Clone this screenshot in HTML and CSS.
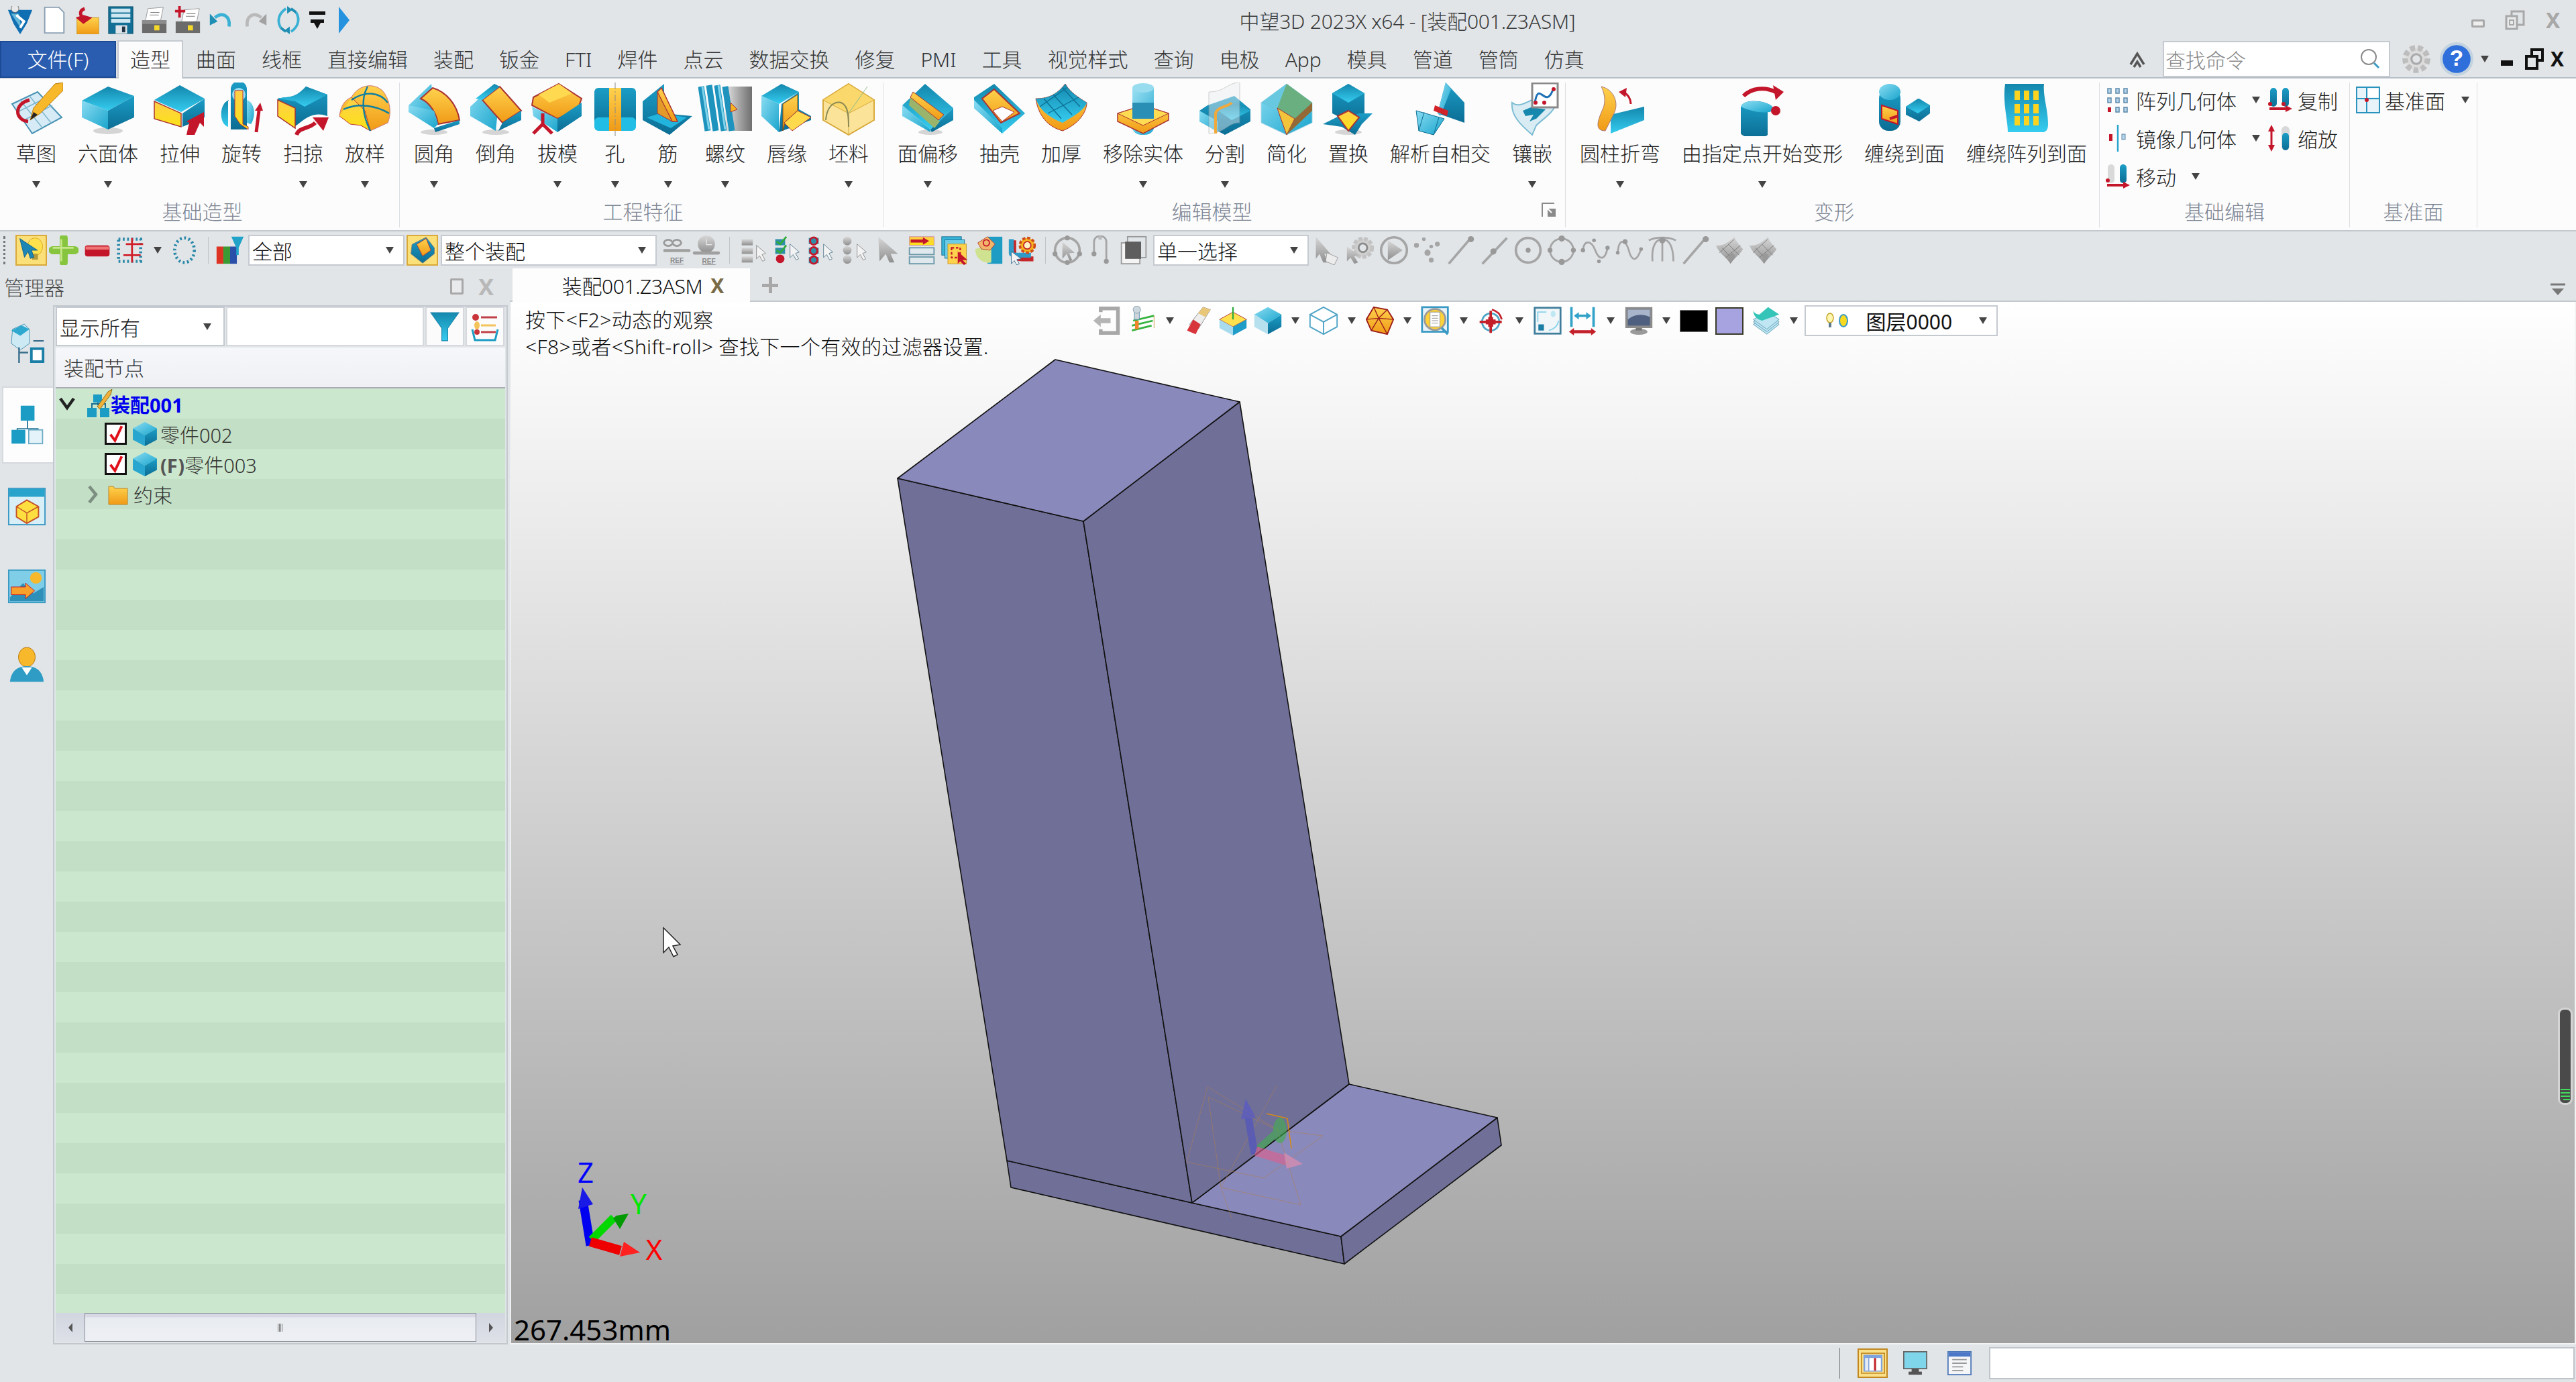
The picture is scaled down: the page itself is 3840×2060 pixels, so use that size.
FILE: index.html
```html
<!DOCTYPE html>
<html lang="zh-CN">
<head>
<meta charset="utf-8">
<title>中望3D 2023X x64 - [装配001.Z3ASM]</title>
<link rel="stylesheet" href="styles.css">
</head>
<body>
<svg class="defs" aria-hidden="true">
<defs>
<linearGradient id="t" x1="0" y1="0" x2="0" y2="1"><stop offset="0" stop-color="#1487ad"/><stop offset="1" stop-color="#35cdf0"/></linearGradient>
<linearGradient id="l" x1="0" y1="0" x2="1" y2="1"><stop offset="0" stop-color="#8adcf2"/><stop offset="1" stop-color="#1aa5cd"/></linearGradient>
<linearGradient id="r" x1="0" y1="0" x2="0" y2="1"><stop offset="0" stop-color="#1b9dc6"/><stop offset="1" stop-color="#0c6d94"/></linearGradient>
<linearGradient id="y" x1="0" y1="0" x2="0" y2="1"><stop offset="0" stop-color="#ffcf4a"/><stop offset="1" stop-color="#fbe216"/></linearGradient>
<linearGradient id="o" x1="0" y1="0" x2="0" y2="1"><stop offset="0" stop-color="#ffd24d"/><stop offset="1" stop-color="#f09a16"/></linearGradient>
<linearGradient id="g" x1="0" y1="0" x2="0" y2="1"><stop offset="0" stop-color="#d8d8d8"/><stop offset="1" stop-color="#8f8f8f"/></linearGradient>
<linearGradient id="m" x1="0" y1="0" x2="1" y2="0"><stop offset="0" stop-color="#e6e6e6"/><stop offset=".6" stop-color="#9c9c9c"/><stop offset="1" stop-color="#6f6f6f"/></linearGradient>

<symbol id="s-sketch" viewBox="0 0 80 80"><polygon points="4,32 42,14 78,52 34,76" fill="#d6ebf5" stroke="#4a93b5" stroke-width="2"/><path d="M16 26 48 66M30 20 62 60M12 44 52 24M22 56 64 34" stroke="#7db6cf" stroke-width="1.5" fill="none"/><path d="M30 26C6 32 8 56 28 58" stroke="#c4162a" stroke-width="5" fill="none"/><polygon points="31,56 36,38 68,2 80,0 80,12 46,46" fill="#f7b82c" stroke="#b97a14"/><polygon points="31,56 36,44 42,48" fill="#222"/></symbol>
<symbol id="s-cube" viewBox="0 0 80 80"><ellipse cx="40" cy="72" rx="22" ry="5" fill="#bbb" opacity=".6"/><polygon points="40,6 79,20 40,42 1,27" fill="url(#t)"/><polygon points="1,27 40,42 40,70 1,52" fill="url(#l)"/><polygon points="79,20 79,52 40,70 40,42" fill="url(#r)"/></symbol>
<symbol id="s-extrude" viewBox="0 0 80 80"><polygon points="40,4 77,24 42,44 2,26" fill="url(#t)"/><polygon points="2,28 42,46 42,66 2,54" fill="url(#y)" stroke="#a33" stroke-width="1.5"/><polygon points="77,24 77,52 44,66 44,46" fill="url(#r)"/><polygon points="50,78 54,60 50,58 76,44 76,66 70,60 62,78" fill="#c4162a"/></symbol>
<symbol id="s-revolve" viewBox="0 0 80 80"><path d="M24 10a12 12 0 0 1 24 0v60H24z" fill="url(#r)"/><path d="M22 26C6 30 6 62 20 66V26z" fill="url(#t)"/><path d="M48 26C60 30 62 50 54 62L48 60z" fill="url(#l)"/><circle cx="36" cy="18" r="10" fill="#9bdcf0"/><polygon points="30,12 42,12 42,62 50,66 50,70 38,62 30,50" fill="url(#y)" stroke="#b33"/><path d="M62 74 66 42" stroke="#c4162a" stroke-width="5"/><polygon points="60,42 72,42 68,30" fill="#c4162a"/></symbol>
<symbol id="s-sweep" viewBox="0 0 80 80"><path d="M2 24C16 20 26 26 44 6L76 18V50C50 40 36 62 26 66L2 50z" fill="url(#r)"/><path d="M2 24C16 20 26 26 44 6L76 18 42 36 28 28z" fill="url(#t)"/><polygon points="2,26 28,38 28,68 2,50" fill="url(#y)" stroke="#a33" stroke-width="1.5"/><path d="M30 78C34 66 48 70 58 60" stroke="#c4162a" stroke-width="6" fill="none"/><polygon points="54,52 78,52 70,72" fill="#c4162a"/></symbol>
<symbol id="s-loft" viewBox="0 0 80 80"><path d="M2 50C4 34 10 26 20 22 28 6 50 -2 66 12 78 26 80 46 74 60L48 72 34 64z" fill="url(#o)" stroke="#c77" stroke-width="1"/><path d="M2 50 18 62 34 64 48 72 40 42 20 22" fill="url(#y)" stroke="#b33"/><path d="M20 26C40 12 62 14 74 30M8 40C30 30 56 34 76 46M44 6C34 24 36 48 48 72" stroke="#0c7ea3" stroke-width="2.4" fill="none"/></symbol>
<symbol id="s-fillet" viewBox="0 0 80 80"><ellipse cx="40" cy="74" rx="20" ry="4" fill="#bbb" opacity=".6"/><polygon points="36,2 2,34 40,68 40,34" fill="url(#l)"/><path d="M20 24 38 8C58 14 74 32 78 56L46 62C44 46 34 30 20 24z" fill="url(#o)" stroke="#a33" stroke-width="2"/><polygon points="2,34 2,44 40,68 46,62 40,42" fill="url(#l)"/><polygon points="78,56 78,62 42,74 40,68" fill="url(#r)"/></symbol>
<symbol id="s-chamfer" viewBox="0 0 80 80"><ellipse cx="40" cy="74" rx="20" ry="4" fill="#bbb" opacity=".6"/><polygon points="38,2 2,36 2,50 40,72 44,34" fill="url(#l)"/><polygon points="46,6 20,26 50,60 78,42" fill="url(#o)" stroke="#a33" stroke-width="2"/><polygon points="78,42 78,56 44,72 50,60" fill="url(#r)"/><polygon points="38,2 46,6 20,26 10,24" fill="url(#t)"/></symbol>
<symbol id="s-draft" viewBox="0 0 80 80"><polygon points="42,2 76,24 70,40 40,54 2,34 4,22" fill="url(#o)" stroke="#a33" stroke-width="2"/><polygon points="42,2 62,16 28,30 12,18" fill="#ffd94f"/><polygon points="2,36 40,54 40,74 4,50" fill="url(#l)"/><polygon points="76,30 76,50 40,74 40,54" fill="url(#r)"/><path d="M18 46V62M18 62 4 76M18 62 32 76" stroke="#c4162a" stroke-width="5" fill="none"/></symbol>
<symbol id="s-hole" viewBox="0 0 80 80"><rect x="9" y="8" width="62" height="62" rx="6" fill="url(#r)"/><rect x="9" y="52" width="62" height="20" rx="6" fill="#22bde4"/><rect x="31" y="8" width="18" height="64" fill="url(#o)"/><path d="M40 0V80" stroke="#8a8a8a" stroke-dasharray="10 3 2 3" fill="none"/></symbol>
<symbol id="s-rib" viewBox="0 0 80 80"><polygon points="2,28 34,2 34,46 76,50 42,78 2,56" fill="url(#r)"/><polygon points="8,52 28,46 68,52 44,68" fill="#22b4dc"/><polygon points="24,14 30,8 54,58 46,58" fill="url(#o)" stroke="#a33" stroke-width="1.5"/><polygon points="24,14 46,58 24,46" fill="#e39a28" stroke="#a33"/></symbol>
<symbol id="s-thread" viewBox="0 0 80 80"><rect x="40" y="6" width="40" height="66" fill="url(#m)"/><path d="M4 6 14 72M16 4 26 72M28 4 38 72M40 6 50 72" stroke="#1d93bd" stroke-width="9"/><path d="M6 6 16 70M30 4 40 70" stroke="#7fd3ea" stroke-width="3"/><polygon points="48,30 58,40 48,44" fill="#f6b21f" stroke="#a33"/></symbol>
<symbol id="s-lip" viewBox="0 0 80 80"><polygon points="32,2 58,14 28,32 2,20" fill="url(#t)"/><polygon points="2,20 28,32 28,74 2,50" fill="url(#l)"/><polygon points="58,14 58,40 76,50 76,56 28,74 32,32" fill="url(#r)"/><polygon points="34,32 56,18 56,42 38,58 34,72 34,56" fill="url(#o)" stroke="#8a4a10"/><polygon points="36,60 56,42 76,52 48,72" fill="#ffda4d" stroke="#a33"/></symbol>
<symbol id="s-stock" viewBox="0 0 80 80"><polygon points="40,2 78,26 78,56 40,78 2,56 2,26" fill="#fbe39a" stroke="#d8a93a" stroke-width="2"/><polygon points="40,2 78,26 40,46 2,26" fill="#fad86c" stroke="#d8a93a"/><path d="M40 46V78" stroke="#d8a93a"/><path d="M6 56C8 30 26 24 34 34 40 40 40 56 40 66" stroke="#8a8a55" stroke-width="2" fill="none"/><path d="M40 46 68 6" stroke="#8fb98f" fill="none"/></symbol>
<symbol id="s-offset" viewBox="0 0 80 80"><ellipse cx="44" cy="74" rx="18" ry="4" fill="#bbb" opacity=".6"/><polygon points="36,2 78,38 44,70 2,34" fill="url(#t)"/><polygon points="2,34 44,70 44,74 2,50" fill="url(#l)"/><polygon points="78,38 78,56 46,74 44,70" fill="url(#r)"/><polygon points="12,34 50,68 58,58 14,22" fill="#9ab56b"/><polygon points="14,22 56,56 64,48 18,14" fill="url(#o)" stroke="#a33"/></symbol>
<symbol id="s-shell" viewBox="0 0 80 80"><polygon points="32,2 78,46 44,76 2,38 2,22" fill="url(#t)"/><polygon points="2,38 44,76 44,68 2,26" fill="url(#l)"/><polygon points="32,10 70,46 42,60 14,24" fill="url(#o)" stroke="#a33" stroke-width="2"/><polygon points="44,36 62,44 44,58 30,42" fill="#fff" stroke="#a33"/></symbol>
<symbol id="s-thicken" viewBox="0 0 80 80"><path d="M2 24C18 24 32 20 46 2 52 14 68 24 78 30 78 44 66 62 42 72 20 66 6 50 2 24z" fill="url(#o)" stroke="#a33"/><path d="M2 24C18 24 32 20 46 2 52 14 68 24 78 30 76 40 56 52 42 60 22 52 8 42 2 24z" fill="url(#t)"/><path d="M14 24 40 54M28 18 56 48M42 8 68 36M8 36 48 8M20 46 66 22" stroke="#0d6e93" stroke-width="1.4" fill="none"/></symbol>
<symbol id="s-remove" viewBox="0 0 80 80"><rect x="24" y="56" width="32" height="22" rx="14" fill="url(#l)"/><polygon points="40,34 78,46 78,56 40,76 2,58 2,46" fill="url(#o)" stroke="#a33" stroke-width="1.5"/><polygon points="40,34 78,46 40,64 2,46" fill="#ffdc52" stroke="#a33"/><rect x="24" y="8" width="32" height="44" fill="url(#l)" opacity=".85"/><rect x="24" y="30" width="32" height="24" fill="#2a8fb4"/><ellipse cx="40" cy="8" rx="16" ry="7" fill="#97dcef"/></symbol>
<symbol id="s-split" viewBox="0 0 80 80"><polygon points="14,34 54,20 78,40 78,58 40,78 2,58 2,42" fill="url(#r)"/><polygon points="2,42 30,58 30,74 2,58" fill="url(#l)"/><path d="M30 42C38 30 48 40 58 30L78 42 50 56z" fill="url(#t)"/><path d="M16 76V14C40 14 44 0 62 0V60C44 60 40 76 16 76z" fill="#e9edf0" opacity=".45" stroke="#9a9a9a"/><path d="M26 76V46C28 36 46 36 50 30" stroke="#f2a93b" stroke-width="4" fill="none"/></symbol>
<symbol id="s-simplify" viewBox="0 0 80 80"><polygon points="40,2 78,30 78,60 40,78 2,60 2,30" fill="url(#l)" stroke="#a9d7e6"/><polygon points="40,2 2,30 40,50" fill="#67c8e0"/><polygon points="40,2 78,30 52,54 26,38" fill="#6aaf7f"/><polygon points="26,38 52,54 40,78 30,50" fill="#f1c43b" stroke="#a33"/><polygon points="52,54 78,30 78,42 40,78" fill="#936a35"/></symbol>
<symbol id="s-replace" viewBox="0 0 80 80"><ellipse cx="40" cy="74" rx="20" ry="4" fill="#bbb" opacity=".6"/><polygon points="40,2 64,16 64,48 40,58 16,46 16,16" fill="url(#r)"/><polygon points="40,2 64,16 40,30 16,16" fill="url(#t)"/><path d="M2 62 26 50 40 60 54 46 76 46 60 62 50 78 30 66z" fill="url(#r)"/><polygon points="24,50 40,42 56,52 40,72" fill="url(#y)" stroke="#a33" stroke-width="2"/></symbol>
<symbol id="s-selfx" viewBox="0 0 80 80"><polygon points="48,0 76,30 76,60 36,46" fill="url(#r)"/><polygon points="48,0 56,10 40,50 36,46" fill="url(#l)"/><polygon points="4,42 46,54 30,78 8,72" fill="url(#l)" stroke="#0c6d94"/><path d="M16 44 8 72M38 52 30 78" stroke="#0c6d94" fill="none"/><polygon points="32,34 52,42 50,50 30,42" fill="#d2232a"/></symbol>
<symbol id="s-inlay" viewBox="0 0 80 80"><path d="M10 30C20 38 30 30 44 24 60 30 78 26 74 36 66 50 58 52 46 64L40 78C24 64 8 50 10 30z" fill="#d9ecf4" stroke="#7cbcd3" stroke-width="2"/><path d="M26 42 50 32 46 38 60 40 46 54 36 58 42 48 30 50z" fill="#1788ad"/><rect x="40" y="1" width="38" height="36" fill="#fff" stroke="#8a8a8a" stroke-width="3"/><path d="M44 30C50 -6 60 44 72 8" stroke="#1b6fb5" stroke-width="3" fill="none"/><circle cx="45" cy="30" r="3" fill="#c4162a"/><circle cx="72" cy="10" r="3" fill="#c4162a"/><circle cx="58" cy="30" r="3" fill="#c4162a"/></symbol>
<symbol id="s-fold" viewBox="0 0 80 80"><polygon points="26,48 76,36 76,56 26,76" fill="url(#t)"/><path d="M12 6C30 10 40 30 30 48L18 72C2 72 6 58 14 40 20 28 16 14 12 6z" fill="url(#o)" stroke="#a77" stroke-width="1"/><path d="M56 32C56 22 50 18 46 14" stroke="#c4162a" stroke-width="3" fill="none"/><polygon points="38,14 50,8 48,22" fill="#c4162a"/></symbol>
<symbol id="s-deform" viewBox="0 0 80 80"><path d="M8 38C8 30 22 24 44 30 62 36 56 44 48 44V78C44 84 12 84 8 76z" fill="url(#r)"/><path d="M8 36C10 28 26 26 44 30 58 34 60 42 50 44 36 46 20 42 8 36z" fill="url(#l)"/><circle cx="60" cy="42" r="7" fill="#c4162a"/><path d="M12 20C24 8 44 6 60 14" stroke="#c4162a" stroke-width="6" fill="none"/><polygon points="56,4 72,14 60,26" fill="#c4162a"/></symbol>
<symbol id="s-wrap" viewBox="0 0 80 80"><rect x="2" y="10" width="32" height="62" rx="14" fill="url(#r)"/><ellipse cx="18" cy="14" rx="16" ry="12" fill="url(#l)"/><path d="M6 34 30 42V62L6 54z" fill="url(#o)" stroke="#c4162a" stroke-width="2"/><path d="M30 50 18 54" stroke="#c4162a" stroke-width="4"/><polygon points="42,36 62,24 78,34 78,46 62,58 42,48" fill="url(#r)"/><polygon points="42,36 60,24 78,34 60,46" fill="url(#t)"/></symbol>
<symbol id="s-wrapp" viewBox="0 0 80 80"><path d="M8 2H66C64 20 72 40 72 62 72 70 70 72 66 74H12C12 56 4 30 8 2z" fill="url(#t)"/><g fill="#fcd41f"><rect x="22" y="12" width="8" height="14"/><rect x="36" y="12" width="8" height="14"/><rect x="50" y="12" width="8" height="14"/><rect x="22" y="32" width="8" height="14"/><rect x="36" y="32" width="8" height="14"/><rect x="50" y="32" width="8" height="14"/><rect x="22" y="50" width="8" height="14"/><rect x="36" y="50" width="8" height="14"/><rect x="50" y="50" width="8" height="14"/></g></symbol>

<symbol id="s-dots" viewBox="0 0 36 40"><g fill="#b7d5ea" stroke="#5b88aa" stroke-width="1.5"><rect x="3" y="3" width="5" height="7"/><rect x="15" y="3" width="5" height="7"/><rect x="27" y="3" width="5" height="7"/><rect x="3" y="17" width="5" height="7"/><rect x="15" y="17" width="5" height="7"/><rect x="27" y="17" width="5" height="7"/><rect x="15" y="31" width="5" height="7"/><rect x="27" y="31" width="5" height="7"/></g><rect x="3" y="31" width="5" height="7" fill="#c4162a"/></symbol>
<symbol id="s-mirror" viewBox="0 0 36 40"><path d="M18 0V40" stroke="#2da6cf" stroke-width="2.5"/><rect x="5" y="14" width="5" height="10" fill="#c4162a"/><rect x="24" y="14" width="5" height="8" fill="#b7d5ea" stroke="#5b88aa"/></symbol>
<symbol id="s-copy" viewBox="0 0 36 40"><rect x="3" y="2" width="10" height="28" rx="5" fill="url(#r)"/><rect x="21" y="2" width="10" height="28" rx="5" fill="url(#r)"/><circle cx="3" cy="26" r="3" fill="#c4162a"/><circle cx="23" cy="26" r="3" fill="#c4162a"/><path d="M2 33H28" stroke="#c4162a" stroke-width="4"/><polygon points="26,28 36,33 26,38" fill="#c4162a"/></symbol>
<symbol id="s-scale" viewBox="0 0 36 40"><path d="M5 8V32" stroke="#c4162a" stroke-width="3"/><polygon points="0,10 10,10 5,0" fill="#c4162a"/><polygon points="0,30 10,30 5,40" fill="#c4162a"/><rect x="20" y="2" width="12" height="36" rx="6" fill="#d8d8d8"/><rect x="21" y="12" width="10" height="26" rx="5" fill="url(#r)"/></symbol>
<symbol id="s-move" viewBox="0 0 36 40"><rect x="3" y="2" width="10" height="28" rx="5" fill="#d9d9d9"/><rect x="21" y="2" width="10" height="28" rx="5" fill="url(#r)"/><circle cx="3" cy="26" r="3" fill="#c4162a"/><path d="M2 33H28" stroke="#c4162a" stroke-width="4"/><polygon points="26,28 36,33 26,38" fill="#c4162a"/></symbol>
<symbol id="s-datum" viewBox="0 0 36 40"><rect x="1" y="1" width="34" height="38" fill="#e9f4fa" stroke="#2a93be" stroke-width="2"/><path d="M16 1V39M1 18H35" stroke="#2a93be" stroke-width="2"/><rect x="18" y="3" width="15" height="13" fill="#fff"/><circle cx="16" cy="20" r="3" fill="#c4162a"/></symbol>

<symbol id="s-hat" viewBox="0 0 48 48"><ellipse cx="30" cy="18" rx="13" ry="15" fill="#fde14d" stroke="#d8a02a"/><rect x="25" y="30" width="10" height="10" fill="#b59a3c"/><polygon points="4,4 12,36 18,26 22,38 28,36 24,24 34,24" fill="#1d86b4" stroke="#0c5e86"/></symbol>
<symbol id="s-plus" viewBox="0 0 48 48"><path d="M24 4V44M6 24H42" stroke="#86c53d" stroke-width="13" stroke-linecap="round"/><path d="M20 6V42M6 20H40" stroke="#c7e68a" stroke-width="3"/></symbol>
<symbol id="s-minus" viewBox="0 0 48 48"><rect x="4" y="16" width="40" height="18" rx="4" fill="#c4162a"/><rect x="5" y="18" width="38" height="5" fill="#ef7474"/></symbol>
<symbol id="s-dplus" viewBox="0 0 48 48"><rect x="4" y="6" width="36" height="36" fill="none" stroke="#2a88a8" stroke-width="5" stroke-dasharray="3 4"/><path d="M26 4V24M16 14H44M26 24V44M12 32H40" stroke="#d0202a" stroke-width="3"/></symbol>
<symbol id="s-dcircle" viewBox="0 0 48 48"><ellipse cx="24" cy="24" rx="16" ry="20" fill="none" stroke="#2a88a8" stroke-width="5" stroke-dasharray="3 4"/></symbol>
<symbol id="s-filterc" viewBox="0 0 48 48"><rect x="2" y="18" width="11" height="28" fill="#d32"/><rect x="13" y="18" width="11" height="28" fill="#3a9a34"/><rect x="24" y="18" width="11" height="28" fill="#2a4fa8"/><polygon points="26,2 46,2 38,20 38,32 34,32 34,20" fill="#21a3c9"/></symbol>
<symbol id="s-asm" viewBox="0 0 48 48"><polygon points="6,14 30,2 44,20 44,30 24,46 4,30" fill="url(#r)" stroke="#777"/><polygon points="14,14 30,4 38,24 24,34" fill="url(#o)" stroke="#a33"/></symbol>
<symbol id="s-ref" viewBox="0 0 48 48"><ellipse cx="10" cy="12" rx="7" ry="5" fill="none" stroke="#9a9a9a" stroke-width="3"/><ellipse cx="24" cy="12" rx="7" ry="5" fill="none" stroke="#9a9a9a" stroke-width="3"/><rect x="2" y="22" width="44" height="5" rx="2" fill="#a0a0a0"/><text x="24" y="45" class="reft">REF</text></symbol>
<symbol id="s-ref2" viewBox="0 0 48 48"><circle cx="24" cy="14" r="14" fill="url(#g)"/><path d="M24 6V15H33" stroke="#fff" fill="none"/><rect x="2" y="26" width="44" height="5" rx="2" fill="#a0a0a0"/><text x="28" y="46" class="reft">REF</text></symbol>
<symbol id="s-chk1" viewBox="0 0 48 48"><g fill="url(#g)"><rect x="4" y="6" width="18" height="10"/><rect x="4" y="20" width="18" height="10"/><rect x="4" y="34" width="18" height="10"/></g><polygon points="28,16 28,38 33,33 38,42 42,40 37,31 43,29" fill="#f3f3f3" stroke="#8a8a8a"/></symbol>
<symbol id="s-chk2" viewBox="0 0 48 48"><g fill="#2f8fa8"><rect x="4" y="6" width="16" height="10"/><rect x="4" y="20" width="16" height="10"/></g><circle cx="12" cy="38" r="7" fill="#c4162a"/><path d="M6 10 12 14 22 2M6 24 12 28 22 16" stroke="#2faa3d" stroke-width="3" fill="none"/><polygon points="28,14 28,36 33,31 38,40 42,38 37,29 43,27" fill="#f3f3f3" stroke="#5c7f90"/></symbol>
<symbol id="s-chk3" viewBox="0 0 48 48"><g fill="#2f8fa8"><rect x="4" y="4" width="16" height="10"/><rect x="4" y="20" width="16" height="10"/><rect x="4" y="35" width="16" height="10"/></g><g fill="none" stroke="#c4162a" stroke-width="3"><circle cx="12" cy="9" r="6"/><circle cx="12" cy="25" r="6"/><circle cx="12" cy="40" r="6"/></g><polygon points="28,14 28,36 33,31 38,40 42,38 37,29 43,27" fill="#f3f3f3" stroke="#5c7f90"/></symbol>
<symbol id="s-chk4" viewBox="0 0 48 48"><g fill="url(#g)"><circle cx="12" cy="9" r="7"/><circle cx="12" cy="24" r="7"/><circle cx="12" cy="39" r="7"/></g><polygon points="28,14 28,36 33,31 38,40 42,38 37,29 43,27" fill="#f3f3f3" stroke="#8a8a8a"/></symbol>
<symbol id="s-gcur" viewBox="0 0 48 48"><polygon points="8,2 40,30 28,30 34,44 26,44 20,30 10,42" fill="url(#g)"/></symbol>
<symbol id="s-list" viewBox="0 0 48 48"><rect x="4" y="2" width="40" height="14" fill="url(#y)" stroke="#c89"/><path d="M6 9H28" stroke="#c4162a" stroke-width="5"/><polygon points="26,3 36,9 26,15" fill="#c4162a"/><rect x="4" y="20" width="40" height="11" fill="#dfe8ec" stroke="#6b97a8" stroke-width="2"/><rect x="4" y="35" width="40" height="11" fill="#dfe8ec" stroke="#6b97a8" stroke-width="2"/></symbol>
<symbol id="s-stack" viewBox="0 0 48 48"><rect x="2" y="2" width="32" height="30" fill="#39b5d8" stroke="#156f92"/><rect x="7" y="7" width="32" height="30" fill="#6ccbe6" stroke="#156f92"/><rect x="12" y="14" width="30" height="32" fill="#ffd24d" stroke="#c79a2a"/><rect x="18" y="20" width="14" height="16" fill="none" stroke="#c4162a" stroke-width="2.5" stroke-dasharray="4 3"/><polygon points="28,26 44,40 36,40 42,46 38,48 32,42 28,46" fill="#c4162a"/></symbol>
<symbol id="s-hand" viewBox="0 0 48 48"><rect x="22" y="2" width="24" height="44" fill="#1e9cc4"/><path d="M2 22C2 40 18 46 28 44V14z" fill="#cfe28f"/><path d="M6 12 22 2 34 14 26 24 12 22z" fill="#f1b66b" stroke="#b5432a"/><circle cx="20" cy="12" r="5" fill="none" stroke="#c4162a" stroke-width="2"/></symbol>
<symbol id="s-gearc" viewBox="0 0 48 48"><path d="M6 8V34C6 42 12 42 42 42V34H16C14 34 14 32 14 8z" fill="#c4262a"/><path d="M2 6V28C2 36 8 36 38 36V28H12C10 28 10 26 10 6z" fill="#2f9cc8"/><circle cx="32" cy="16" r="12" fill="#f6b21f" stroke="#d04a1a" stroke-width="4" stroke-dasharray="5 3"/><circle cx="32" cy="16" r="6" fill="#fff3c4" stroke="#c4262a" stroke-width="2"/><polygon points="6,26 6,46 11,41 15,48 19,46 15,39 22,38" fill="#f3f3f3" stroke="#3a6f90"/></symbol>
<symbol id="s-gcirc" viewBox="0 0 48 48"><circle cx="24" cy="24" r="20" fill="none" stroke="#a5a5a5" stroke-width="4"/><polygon points="16,10 36,28 27,29 32,40 28,42 23,30 16,38" fill="url(#g)"/><circle cx="24" cy="4" r="4" fill="#999"/><circle cx="4" cy="30" r="4" fill="#999"/><circle cx="44" cy="30" r="4" fill="#999"/><circle cx="24" cy="44" r="4" fill="#999"/></symbol>
<symbol id="s-garc" viewBox="0 0 48 48"><path d="M14 32V10C14 -2 34 -2 34 10V42" stroke="#a5a5a5" stroke-width="3" fill="none"/><circle cx="14" cy="30" r="4" fill="#999"/><circle cx="24" cy="4" r="3" fill="#bbb"/><circle cx="34" cy="42" r="4" fill="#999"/></symbol>
<symbol id="s-square" viewBox="0 0 48 48"><rect x="14" y="2" width="30" height="34" fill="none" stroke="#9a9a9a" stroke-width="2"/><rect x="4" y="12" width="30" height="34" fill="#f4f4f4" stroke="#9a9a9a" stroke-width="2"/><rect x="10" y="10" width="26" height="28" fill="#5e5e5e"/></symbol>
<symbol id="s-gtag" viewBox="0 0 48 48"><polygon points="6,2 30,30 20,30 26,44 18,44 12,30 6,38" fill="url(#g)"/><polygon points="24,28 42,36 36,48 22,42" fill="#ececec" stroke="#9a9a9a"/></symbol>
<symbol id="s-ggear" viewBox="0 0 48 48"><circle cx="28" cy="20" r="15" fill="#cfcfcf" stroke="#c3c3c3" stroke-width="6" stroke-dasharray="6 3"/><circle cx="28" cy="20" r="7" fill="#e1e5e8" stroke="#8a8a8a" stroke-width="3"/><polygon points="2,18 2,42 8,36 14,46 20,44 14,34 22,32" fill="url(#g)"/></symbol>
<symbol id="s-gplay" viewBox="0 0 48 48"><circle cx="24" cy="24" r="21" fill="none" stroke="#a5a5a5" stroke-width="4"/><polygon points="14,8 38,24 14,40" fill="url(#g)"/></symbol>
<symbol id="s-gdots" viewBox="0 0 48 48"><g fill="#a5a5a5"><circle cx="6" cy="16" r="4"/><circle cx="18" cy="6" r="3"/><circle cx="24" cy="28" r="5"/><circle cx="30" cy="18" r="3"/><circle cx="40" cy="14" r="4"/><circle cx="30" cy="40" r="4"/></g></symbol>
<symbol id="s-gline" viewBox="0 0 48 48"><path d="M4 46 40 4" stroke="#a5a5a5" stroke-width="4"/><circle cx="40" cy="6" r="5" fill="#999"/></symbol>
<symbol id="s-gline2" viewBox="0 0 48 48"><path d="M4 46 44 4" stroke="#a5a5a5" stroke-width="4"/><circle cx="22" cy="26" r="5" fill="#999"/></symbol>
<symbol id="s-gcc" viewBox="0 0 48 48"><circle cx="24" cy="24" r="20" fill="none" stroke="#a5a5a5" stroke-width="4"/><circle cx="24" cy="24" r="4" fill="#999"/></symbol>
<symbol id="s-gc3" viewBox="0 0 48 48"><circle cx="24" cy="24" r="19" fill="none" stroke="#a5a5a5" stroke-width="3"/><circle cx="24" cy="5" r="5" fill="#999"/><circle cx="5" cy="24" r="4" fill="#999"/><circle cx="43" cy="24" r="4" fill="#999"/><circle cx="24" cy="43" r="5" fill="#999"/></symbol>
<symbol id="s-gwave" viewBox="0 0 48 48"><path d="M4 24C6 6 18 8 24 24S40 42 44 20" stroke="#a5a5a5" stroke-width="3" fill="none"/><circle cx="22" cy="8" r="3" fill="#999"/><circle cx="4" cy="24" r="3.5" fill="#999"/><circle cx="44" cy="20" r="3.5" fill="#999"/><circle cx="30" cy="42" r="3" fill="#999"/></symbol>
<symbol id="s-gwave2" viewBox="0 0 48 48"><path d="M6 28C8 2 20 8 24 24S36 46 44 22" stroke="#a5a5a5" stroke-width="3" fill="none"/><circle cx="18" cy="10" r="4" fill="#999"/><circle cx="6" cy="28" r="3" fill="#999"/><circle cx="44" cy="22" r="3" fill="#999"/></symbol>
<symbol id="s-garch" viewBox="0 0 48 48"><path d="M8 42C6 16 14 6 24 6S42 16 42 42M2 8C14 2 34 2 46 8M24 6V42" stroke="#a5a5a5" stroke-width="3" fill="none"/><circle cx="24" cy="8" r="5" fill="#999"/></symbol>
<symbol id="s-gsurf" viewBox="0 0 48 48"><path d="M2 16C14 18 24 10 32 2 36 12 42 18 46 22 42 30 32 36 26 46 18 34 8 30 2 16z" fill="url(#g)"/><path d="M12 20 30 40M22 14 40 32M8 28 32 6M18 36 42 16" stroke="#777" stroke-width="1" fill="none"/><circle cx="28" cy="34" r="5" fill="#999"/></symbol>
<symbol id="s-exit" viewBox="0 0 48 48"><path d="M14 10V4H42V44H14V38" stroke="#a8a8a8" stroke-width="6" fill="none"/><path d="M14 20H30V28H14V34L2 24 14 14z" fill="#b5b5b5"/></symbol>
<symbol id="s-tool" viewBox="0 0 48 48"><path d="M10 24 44 16M8 32 42 24M8 40 40 32" stroke="#33b33d" stroke-width="3"/><path d="M44 16V36" stroke="#c99342"/><rect x="12" y="4" width="8" height="18" fill="#cfd6da" stroke="#5a8fb0"/><circle cx="16" cy="6" r="6" fill="#cdd8de" stroke="#7b97a5"/><rect x="13" y="24" width="6" height="14" fill="#f0832c"/></symbol>
<symbol id="s-eraser" viewBox="0 0 48 48"><polygon points="32,2 44,6 24,38 10,30" fill="#eeeeee" stroke="#8a8a8a"/><polygon points="32,2 44,6 36,18 24,12" fill="#e8c878"/><polygon points="16,22 28,30 20,46 6,40" fill="#d8343b"/></symbol>
<symbol id="s-vcube1" viewBox="0 0 48 48"><polygon points="24,10 46,22 24,34 2,22" fill="#ffe04d" stroke="#a33"/><polygon points="2,22 24,34 24,48 2,36" fill="#a9dbee"/><polygon points="46,22 46,36 24,48 24,34" fill="#1f9cc8"/><path d="M24 2V22" stroke="#2faa3d" stroke-width="2.5"/></symbol>
<symbol id="s-vcube2" viewBox="0 0 48 48"><polygon points="24,2 46,14 24,28 2,14" fill="url(#l)"/><polygon points="2,14 24,28 24,46 2,34" fill="#b7e0ef"/><polygon points="46,14 46,34 24,46 24,28" fill="url(#r)"/></symbol>
<symbol id="s-vcube3" viewBox="0 0 48 48"><polygon points="24,2 46,14 46,34 24,46 2,34 2,14" fill="#fff" stroke="#4ca2c6" stroke-width="2"/><path d="M2 14 24 26 46 14M24 26V46" stroke="#4ca2c6" stroke-width="2" fill="none"/></symbol>
<symbol id="s-poly" viewBox="0 0 48 48"><polygon points="14,2 36,6 46,22 36,46 10,40 2,22" fill="url(#o)" stroke="#9b1c1c" stroke-width="2"/><path d="M22 20 14 2M22 20 46 22M22 20 2 22M22 20 10 40M22 20 36 46M22 20 36 6" stroke="#9b1c1c" stroke-width="1.5"/></symbol>
<symbol id="s-doc" viewBox="0 0 48 48"><rect x="2" y="2" width="42" height="40" fill="#e8f2f7" stroke="#3a9ac4" stroke-width="3"/><circle cx="23" cy="22" r="17" fill="#ffd23a" stroke="#9a9a9a" stroke-width="3"/><rect x="15" y="10" width="16" height="24" fill="#fff" stroke="#8a8a8a"/><path d="M18 16H28M18 20H28M18 24H28M18 28H28" stroke="#8a8a8a"/><path d="M34 36 44 46" stroke="#3a9ac4" stroke-width="4"/></symbol>
<symbol id="s-target" viewBox="0 0 48 48"><circle cx="22" cy="26" r="14" fill="none" stroke="#4fa5c5" stroke-width="3"/><path d="M22 8V44M4 26H40" stroke="#c4202a" stroke-width="4" stroke-dasharray="14 8"/><rect x="14" y="22" width="16" height="8" fill="#c4202a"/><rect x="18" y="18" width="8" height="16" fill="#c4202a"/><path d="M24 6C32 8 38 14 40 22" stroke="#c4202a" stroke-width="3" fill="none"/></symbol>
<symbol id="s-fit" viewBox="0 0 48 48"><rect x="3" y="3" width="42" height="42" fill="#f1f6f9" stroke="#3f7d9b" stroke-width="3"/><path d="M8 26V10H22M42 24C40 34 34 38 26 40" stroke="#8ad3ea" stroke-width="2" fill="none"/><ellipse cx="33" cy="13" rx="4" ry="5" fill="#bfe7f2"/><rect x="9" y="30" width="9" height="10" fill="#1a7ea5"/></symbol>
<symbol id="s-dim" viewBox="0 0 48 48"><path d="M6 2V34M42 2V34" stroke="#32a2c8" stroke-width="4"/><path d="M12 16H36" stroke="#32a2c8" stroke-width="4"/><polygon points="10,16 18,10 18,22" fill="#32a2c8"/><polygon points="38,16 30,10 30,22" fill="#32a2c8"/><path d="M8 42H40" stroke="#c4202a" stroke-width="5"/><polygon points="2,42 10,36 10,48" fill="#c4202a"/><polygon points="46,42 38,36 38,48" fill="#c4202a"/></symbol>
<symbol id="s-mon" viewBox="0 0 48 48"><rect x="2" y="2" width="44" height="34" fill="#8b8b8b"/><rect x="6" y="6" width="36" height="26" fill="#4e5f80"/><path d="M6 6H42V18C28 12 16 14 6 22z" fill="#a8b4c9"/><ellipse cx="24" cy="42" rx="14" ry="5" fill="#9a9a9a"/><rect x="19" y="36" width="10" height="4" fill="#777"/></symbol>
<symbol id="s-layers" viewBox="0 0 48 48"><polygon points="4,30 28,18 46,30 26,46" fill="#bfe6f2" stroke="#5b9ab3"/><polygon points="4,26 28,14 46,26 26,42" fill="#bfe6f2" stroke="#5b9ab3"/><polygon points="4,22 28,10 46,22 26,38" fill="#bfe6f2" stroke="#5b9ab3"/><path d="M4 8C4 16 10 22 18 24L46 14 28 2 14 14C10 14 6 12 4 8z" fill="#34c5b8"/></symbol>
<symbol id="s-bulbs" viewBox="0 0 40 24"><ellipse cx="8" cy="8" rx="5" ry="7" fill="#fff7b0" stroke="#c5a52a" stroke-width="1.5"/><rect x="6" y="15" width="4" height="7" fill="#5b7a8a"/><ellipse cx="28" cy="12" rx="6" ry="9" fill="#f7d91f" stroke="#3a9ac4" stroke-width="2"/></symbol>

<symbol id="s-logo" viewBox="0 0 40 44"><polygon points="1,6 39,6 30,28 20,44 10,28" fill="#0f6fb2"/><polygon points="6,12 18,12 22,36" fill="#64b6d8"/><path d="M18 4A6 6 0 1 1 18 3.9" fill="#e8e8e8" stroke="#666"/><path d="M14 14 26 24 20 34" stroke="#fff" stroke-width="4" fill="none"/></symbol>
<symbol id="s-new" viewBox="0 0 40 44"><path d="M6 2H28L36 10V42H6z" fill="#fff" stroke="#8aa0b4" stroke-width="2"/></symbol>
<symbol id="s-open" viewBox="0 0 40 44"><rect x="4" y="18" width="34" height="26" fill="url(#o)" stroke="#c89a2a"/><path d="M20 20C8 18 6 8 16 4" stroke="#c4162a" stroke-width="5" fill="none"/><polygon points="14,14 28,18 14,28 2,18" fill="#c4162a"/></symbol>
<symbol id="s-save" viewBox="0 0 40 44"><rect x="1" y="1" width="38" height="42" fill="#126f95" stroke="#0c4f6c"/><rect x="5" y="4" width="30" height="6" fill="#cfe7f1"/><rect x="5" y="12" width="30" height="6" fill="#cfe7f1"/><rect x="5" y="20" width="30" height="6" fill="#cfe7f1"/><rect x="12" y="30" width="18" height="13" fill="#dfe5e8"/><rect x="22" y="32" width="5" height="9" fill="#234"/></symbol>
<symbol id="s-print" viewBox="0 0 40 44"><polygon points="10,4 34,2 30,22 6,24" fill="#fff" stroke="#999"/><path d="M14 10H28M13 14H27" stroke="#777"/><rect x="1" y="22" width="38" height="20" fill="#6b6b6b"/><rect x="1" y="22" width="38" height="6" fill="#8c8c8c"/><rect x="20" y="30" width="8" height="8" fill="#f5d92a"/></symbol>
<symbol id="s-print2" viewBox="0 0 40 44"><polygon points="14,6 38,4 34,24 10,26" fill="#fff" stroke="#999"/><path d="M18 12H32M17 16H31" stroke="#777"/><rect x="1" y="24" width="38" height="18" fill="#6b6b6b"/><rect x="20" y="30" width="8" height="8" fill="#f5d92a"/><path d="M7 0V18M0 8H16" stroke="#c4162a" stroke-width="4"/></symbol>
<symbol id="s-undo" viewBox="0 0 40 44"><path d="M32 32C34 16 22 8 10 18" stroke="#3ab1d4" stroke-width="5" fill="none"/><polygon points="2,12 14,24 2,30" fill="#1f8eb3"/></symbol>
<symbol id="s-redo" viewBox="0 0 40 44"><path d="M8 32C6 16 18 8 30 18" stroke="#b9b9b9" stroke-width="5" fill="none"/><polygon points="38,12 26,24 38,30" fill="#a2a2a2"/></symbol>
<symbol id="s-refresh" viewBox="0 0 40 44"><path d="M16 4C4 12 2 24 8 34M24 40C36 32 38 20 32 10" stroke="#3ab1d4" stroke-width="4" fill="none"/><path d="M24 4 32 10M16 40 8 34" stroke="#1f8eb3" stroke-width="4"/><polygon points="18,0 26,6 18,12" fill="#1f8eb3"/><polygon points="22,44 14,38 22,32" fill="#1f8eb3"/></symbol>
<symbol id="s-play" viewBox="0 0 20 44"><polygon points="2,2 18,22 2,42" fill="#2492df"/></symbol>
<symbol id="s-qdd" viewBox="0 0 24 30"><rect x="0" y="2" width="24" height="5" fill="#111"/><rect x="2" y="14" width="20" height="5" fill="#111"/><polygon points="7,19 17,19 12,28" fill="#111"/></symbol>

<symbol id="s-sidehier" viewBox="0 0 60 60"><polygon points="8,8 26,0 34,8 34,30 20,40 6,30" fill="#cde9f3" stroke="#4b93b3"/><polygon points="6,10 20,18 34,8 22,2" fill="#2fa8cf"/><path d="M40 26H56M18 36V60M18 44H32" stroke="#3a6f8c" stroke-width="2.5" fill="none"/><rect x="37" y="38" width="18" height="20" fill="#fff" stroke="#1a7fa6" stroke-width="4"/></symbol>
<symbol id="s-sidetree" viewBox="0 0 60 70"><rect x="17" y="2" width="24" height="26" fill="#1a9cc5"/><path d="M29 28V42M11 50V42H47V50" stroke="#1a6f93" stroke-width="2" fill="none"/><rect x="1" y="44" width="24" height="24" fill="#1a9cc5"/><rect x="31" y="44" width="24" height="24" fill="#e4f3f9" stroke="#6aaac4" stroke-width="2"/></symbol>
<symbol id="s-sidepart" viewBox="0 0 60 60"><rect x="2" y="2" width="56" height="56" fill="#d9eff7" stroke="#3a9ac4" stroke-width="2"/><rect x="3" y="3" width="54" height="12" fill="#28a3cb"/><polygon points="30,20 48,30 48,46 30,56 14,46 14,30" fill="#ffdf3f" stroke="#c4522a" stroke-width="2"/><path d="M14 30 30 40 48 30M30 40V56" stroke="#c4522a" stroke-width="1.5" fill="none"/></symbol>
<symbol id="s-sideview" viewBox="0 0 60 60"><rect x="2" y="6" width="56" height="50" fill="#7fcde6" stroke="#3a9ac4" stroke-width="2"/><circle cx="44" cy="18" r="9" fill="#f7b82c"/><path d="M4 48 24 26 40 42 56 32V54H4z" fill="#2e8fb8"/><polygon points="6,32 28,32 28,26 42,38 28,50 28,44 6,44" fill="#f7a02c" stroke="#c4162a"/></symbol>
<symbol id="s-sideuser" viewBox="0 0 60 60"><ellipse cx="30" cy="18" rx="13" ry="15" fill="#f7b82c" stroke="#b97a14"/><path d="M4 56C6 36 20 32 30 32S54 36 56 56z" fill="#2e9cc4"/><path d="M22 34 30 46 38 34" fill="#fff"/></symbol>

<symbol id="s-panfilter" viewBox="0 0 40 40"><polygon points="1,1 39,1 24,22 24,39 16,39 16,22" fill="url(#t)" stroke="#1a86ad"/></symbol>
<symbol id="s-panlist" viewBox="0 0 40 44"><circle cx="6" cy="8" r="5" fill="#c9343b"/><path d="M14 8H38" stroke="#c04048" stroke-width="3"/><ellipse cx="8" cy="20" rx="4" ry="6" fill="#f4c35a"/><path d="M14 20H36" stroke="#f4c35a" stroke-width="3"/><circle cx="8" cy="30" r="4" fill="#c9343b"/><path d="M14 30H36" stroke="#c04048" stroke-width="3"/><path d="M1 26 5 42H35L39 26" stroke="#1b9cc4" stroke-width="3" fill="none"/></symbol>
<symbol id="s-treeasm" viewBox="0 0 40 44"><rect x="10" y="8" width="13" height="12" fill="#1a9cc5"/><rect x="1" y="28" width="14" height="14" fill="#1a9cc5"/><rect x="20" y="28" width="14" height="14" fill="#1a9cc5"/><path d="M8 28V22H28V28M17 20V24" stroke="#1a6f93" stroke-width="2" fill="none"/><polygon points="16,26 32,4 38,0 36,8 20,30" fill="#f2b23a" stroke="#8a6a1a"/></symbol>
<symbol id="s-treecube" viewBox="0 0 36 36"><polygon points="18,1 35,10 18,20 1,10" fill="url(#l)"/><polygon points="1,10 18,20 18,35 1,26" fill="#28a6cf"/><polygon points="35,10 35,26 18,35 18,20" fill="url(#r)"/></symbol>
<symbol id="s-folder" viewBox="0 0 30 32"><path d="M1 4H8L10 7H29V31H1z" fill="url(#o)" stroke="#b8842a"/></symbol>
<symbol id="s-st1" viewBox="0 0 46 40"><rect x="1" y="1" width="44" height="38" fill="#fbe08a" stroke="#c2881f" stroke-width="2"/><rect x="5" y="4" width="36" height="32" fill="#7fa3dc"/><rect x="16" y="10" width="22" height="24" fill="#fff"/><path d="M27 10V34" stroke="#c4262a" stroke-width="4"/><rect x="8" y="10" width="6" height="24" fill="#e7edf5"/></symbol>
<symbol id="s-st2" viewBox="0 0 40 40"><rect x="1" y="1" width="38" height="28" fill="#7fd6ea" stroke="#666" stroke-width="2"/><rect x="14" y="29" width="12" height="6" fill="#555"/><rect x="9" y="34" width="22" height="5" fill="#555"/></symbol>
<symbol id="s-st3" viewBox="0 0 40 40"><rect x="1" y="1" width="38" height="38" fill="#f4f6f8" stroke="#4d78b8" stroke-width="2"/><rect x="2" y="2" width="36" height="7" fill="#4d78c8"/><path d="M8 14H32M8 20H32M8 26H26M8 32H26" stroke="#999" stroke-width="2"/></symbol>
<symbol id="s-launch" viewBox="0 0 24 24"><path d="M2 22V2H20" stroke="#8a8a8a" stroke-width="2" fill="none"/><rect x="10" y="10" width="12" height="12" fill="#8a8a8a"/><path d="M6 6 16 16" stroke="#fff" stroke-width="2"/></symbol>
</defs>
</svg>

<div class="app">
  <header class="titlebar">
    <div class="qat">
      <svg class="q"><use href="#s-logo"/></svg><svg class="q"><use href="#s-new"/></svg><svg class="q"><use href="#s-open"/></svg><svg class="q"><use href="#s-save"/></svg><svg class="q"><use href="#s-print"/></svg><svg class="q"><use href="#s-print2"/></svg><svg class="q"><use href="#s-undo"/></svg><svg class="q"><use href="#s-redo"/></svg><svg class="q"><use href="#s-refresh"/></svg><svg class="q-dd"><use href="#s-qdd"/></svg><svg class="q-play"><use href="#s-play"/></svg>
    </div>
    <div class="title">中望3D 2023X x64 - [装配001.Z3ASM]</div>
    <div class="winbtns">
      <span class="wb-min"></span>
      <svg class="wb-res" viewBox="0 0 30 30"><rect x="10" y="2" width="18" height="20" fill="none" stroke="#a8a8a8" stroke-width="3"/><rect x="2" y="9" width="16" height="19" fill="#e8eaec" stroke="#a8a8a8" stroke-width="3"/><rect x="7" y="15" width="6" height="7" fill="none" stroke="#a8a8a8" stroke-width="2"/></svg>
      <span class="wb-x">X</span>
    </div>
  </header>

  <nav class="tabs">
    <div class="tab file">文件(F)</div>
    <div class="tab active">造型</div><div class="tab">曲面</div><div class="tab">线框</div><div class="tab">直接编辑</div><div class="tab">装配</div><div class="tab">钣金</div><div class="tab">FTI</div><div class="tab">焊件</div><div class="tab">点云</div><div class="tab">数据交换</div><div class="tab">修复</div><div class="tab">PMI</div><div class="tab">工具</div><div class="tab">视觉样式</div><div class="tab">查询</div><div class="tab">电极</div><div class="tab">App</div><div class="tab">模具</div><div class="tab">管道</div><div class="tab">管筒</div><div class="tab">仿真</div>
    <div class="tabtools">
      <svg class="collapse" viewBox="0 0 32 32"><path d="M6 24 16 8 26 24M11 28 16 20 21 28" stroke="#555" stroke-width="3.5" fill="none"/></svg>
      <div class="search"><span>查找命令</span><svg class="mag" viewBox="0 0 32 32"><circle cx="14" cy="13" r="11" fill="#fff" stroke="#8a8a8a" stroke-width="2"/><path d="M22 22 29 29" stroke="#3a9ac4" stroke-width="3"/></svg></div>
      <svg class="gear" viewBox="0 0 48 48"><circle cx="24" cy="24" r="16" fill="#dcdcdc" stroke="#bdbdbd" stroke-width="8" stroke-dasharray="7 4"/><circle cx="24" cy="24" r="7" fill="#e1e5e8" stroke="#a9a9a9" stroke-width="3"/></svg>
      <svg class="help" viewBox="0 0 48 48"><circle cx="24" cy="24" r="22" fill="#2f6fdc" stroke="#c3d2df" stroke-width="4"/><text x="24" y="34" class="helpt">?</text></svg>
      <i class="dd dd-help"></i>
      <span class="mb-min"></span>
      <svg class="mb-res" viewBox="0 0 28 32"><rect x="10" y="2" width="16" height="16" fill="none" stroke="#111" stroke-width="4"/><rect x="2" y="12" width="16" height="18" fill="#e1e5e8" stroke="#111" stroke-width="4"/></svg>
      <span class="mb-x">X</span>
    </div>
  </nav>

  <section class="ribbon">
    <div class="grp g1">
      <div class="btns">
        <div class="rb"><svg class="i80"><use href="#s-sketch"/></svg><span class="rl">草图</span><i class="dd"></i></div>
        <div class="rb"><svg class="i80"><use href="#s-cube"/></svg><span class="rl">六面体</span><i class="dd"></i></div>
        <div class="rb"><svg class="i80"><use href="#s-extrude"/></svg><span class="rl">拉伸</span></div>
        <div class="rb"><svg class="i80"><use href="#s-revolve"/></svg><span class="rl">旋转</span></div>
        <div class="rb"><svg class="i80"><use href="#s-sweep"/></svg><span class="rl">扫掠</span><i class="dd"></i></div>
        <div class="rb"><svg class="i80"><use href="#s-loft"/></svg><span class="rl">放样</span><i class="dd"></i></div>
      </div>
      <div class="gl">基础造型</div>
    </div>
    <div class="grp g2">
      <div class="btns">
        <div class="rb"><svg class="i80"><use href="#s-fillet"/></svg><span class="rl">圆角</span><i class="dd"></i></div>
        <div class="rb"><svg class="i80"><use href="#s-chamfer"/></svg><span class="rl">倒角</span></div>
        <div class="rb"><svg class="i80"><use href="#s-draft"/></svg><span class="rl">拔模</span><i class="dd"></i></div>
        <div class="rb one"><svg class="i80"><use href="#s-hole"/></svg><span class="rl">孔</span><i class="dd"></i></div>
        <div class="rb one"><svg class="i80"><use href="#s-rib"/></svg><span class="rl">筋</span><i class="dd"></i></div>
        <div class="rb"><svg class="i80"><use href="#s-thread"/></svg><span class="rl">螺纹</span><i class="dd"></i></div>
        <div class="rb"><svg class="i80"><use href="#s-lip"/></svg><span class="rl">唇缘</span></div>
        <div class="rb"><svg class="i80"><use href="#s-stock"/></svg><span class="rl">坯料</span><i class="dd"></i></div>
      </div>
      <div class="gl">工程特征</div>
    </div>
    <div class="grp g3">
      <div class="btns">
        <div class="rb"><svg class="i80"><use href="#s-offset"/></svg><span class="rl">面偏移</span><i class="dd"></i></div>
        <div class="rb"><svg class="i80"><use href="#s-shell"/></svg><span class="rl">抽壳</span></div>
        <div class="rb"><svg class="i80"><use href="#s-thicken"/></svg><span class="rl">加厚</span></div>
        <div class="rb"><svg class="i80"><use href="#s-remove"/></svg><span class="rl">移除实体</span><i class="dd"></i></div>
        <div class="rb"><svg class="i80"><use href="#s-split"/></svg><span class="rl">分割</span><i class="dd"></i></div>
        <div class="rb"><svg class="i80"><use href="#s-simplify"/></svg><span class="rl">简化</span></div>
        <div class="rb"><svg class="i80"><use href="#s-replace"/></svg><span class="rl">置换</span></div>
        <div class="rb"><svg class="i80"><use href="#s-selfx"/></svg><span class="rl">解析自相交</span></div>
        <div class="rb"><svg class="i80"><use href="#s-inlay"/></svg><span class="rl">镶嵌</span><i class="dd"></i></div>
      </div>
      <div class="gl gl-shift">编辑模型</div>
      <svg class="launch"><use href="#s-launch"/></svg>
    </div>
    <div class="grp g4">
      <div class="btns">
        <div class="rb"><svg class="i80"><use href="#s-fold"/></svg><span class="rl">圆柱折弯</span><i class="dd"></i></div>
        <div class="rb"><svg class="i80"><use href="#s-deform"/></svg><span class="rl">由指定点开始变形</span><i class="dd"></i></div>
        <div class="rb"><svg class="i80"><use href="#s-wrap"/></svg><span class="rl">缠绕到面</span></div>
        <div class="rb"><svg class="i80"><use href="#s-wrapp"/></svg><span class="rl">缠绕阵列到面</span></div>
      </div>
      <div class="gl">变形</div>
    </div>
    <div class="grp g5">
      <div class="smgrid">
        <div class="sb"><svg class="i36"><use href="#s-dots"/></svg><span>阵列几何体</span><i class="dd sdd"></i></div>
        <div class="sb sb-r"><svg class="i36"><use href="#s-copy"/></svg><span>复制</span></div>
        <div class="sb"><svg class="i36"><use href="#s-mirror"/></svg><span>镜像几何体</span><i class="dd sdd"></i></div>
        <div class="sb sb-r"><svg class="i36"><use href="#s-scale"/></svg><span>缩放</span></div>
        <div class="sb"><svg class="i36"><use href="#s-move"/></svg><span>移动</span><i class="dd sdd"></i></div>
      </div>
      <div class="gl">基础编辑</div>
    </div>
    <div class="grp g6">
      <div class="smgrid one-col">
        <div class="sb sb-d"><svg class="i36"><use href="#s-datum"/></svg><span>基准面</span><i class="dd sdd"></i></div>
      </div>
      <div class="gl">基准面</div>
    </div>
  </section>

  <section class="toolbar">
    <span class="grip"></span>
    <div class="hot"><svg class="t46"><use href="#s-hat"/></svg></div>
    <div class="ti"><svg class="t46"><use href="#s-plus"/></svg></div>
    <div class="ti"><svg class="t46"><use href="#s-minus"/></svg></div>
    <div class="ti"><svg class="t46"><use href="#s-dplus"/></svg></div>
    <div class="tdd"><i class="dd"></i></div>
    <div class="ti"><svg class="t46"><use href="#s-dcircle"/></svg></div>
    <span class="tsep s20"></span>
    <div class="ti ti46"><svg class="t46"><use href="#s-filterc"/></svg></div>
    <div class="combo c-all">全部<i class="dd"></i></div>
    <div class="hot hot2"><svg class="t46"><use href="#s-asm"/></svg></div>
    <div class="combo c-asm">整个装配<i class="dd"></i></div>
    <div class="ti ti44 first-ref"><svg class="t46"><use href="#s-ref"/></svg></div>
    <div class="ti ti44"><svg class="t46"><use href="#s-ref2"/></svg></div>
    <span class="tsep s24"></span>
    <div class="ti"><svg class="t46"><use href="#s-chk1"/></svg></div>
    <div class="ti"><svg class="t46"><use href="#s-chk2"/></svg></div>
    <div class="ti"><svg class="t46"><use href="#s-chk3"/></svg></div>
    <div class="ti"><svg class="t46"><use href="#s-chk4"/></svg></div>
    <div class="ti"><svg class="t46"><use href="#s-gcur"/></svg></div>
    <div class="ti"><svg class="t46"><use href="#s-list"/></svg></div>
    <div class="ti"><svg class="t46"><use href="#s-stack"/></svg></div>
    <div class="ti"><svg class="t46"><use href="#s-hand"/></svg></div>
    <div class="ti"><svg class="t46"><use href="#s-gearc"/></svg></div>
    <span class="tsep s18"></span>
    <div class="ti ti48"><svg class="t46"><use href="#s-gcirc"/></svg></div>
    <div class="ti"><svg class="t46"><use href="#s-garc"/></svg></div>
    <div class="ti"><svg class="t46"><use href="#s-square"/></svg></div>
    <div class="combo c-sel">单一选择<i class="dd"></i></div>
    <div class="ti"><svg class="t46"><use href="#s-gtag"/></svg></div>
    <div class="ti"><svg class="t46"><use href="#s-ggear"/></svg></div>
    <div class="ti"><svg class="t46"><use href="#s-gplay"/></svg></div>
    <div class="ti"><svg class="t46"><use href="#s-gdots"/></svg></div>
    <div class="ti"><svg class="t46"><use href="#s-gline"/></svg></div>
    <div class="ti"><svg class="t46"><use href="#s-gline2"/></svg></div>
    <div class="ti"><svg class="t46"><use href="#s-gcc"/></svg></div>
    <div class="ti"><svg class="t46"><use href="#s-gc3"/></svg></div>
    <div class="ti"><svg class="t46"><use href="#s-gwave"/></svg></div>
    <div class="ti"><svg class="t46"><use href="#s-gwave2"/></svg></div>
    <div class="ti"><svg class="t46"><use href="#s-garch"/></svg></div>
    <div class="ti"><svg class="t46"><use href="#s-gline"/></svg></div>
    <div class="ti"><svg class="t46"><use href="#s-gsurf"/></svg></div>
    <div class="ti"><svg class="t46"><use href="#s-gsurf"/></svg></div>
  </section>

  <main class="workspace">
    <aside class="manager">
      <div class="mgr-head"><span>管理器</span><i class="pin"></i><b class="mgr-x">X</b></div>
      <div class="mgr-body">
        <div class="rail">
          <div class="rail-i first"><svg class="i60"><use href="#s-sidehier"/></svg></div>
          <div class="rail-i on"><svg class="i60"><use href="#s-sidetree"/></svg></div>
          <div class="rail-i after"><svg class="i60"><use href="#s-sidepart"/></svg></div>
          <div class="rail-i"><svg class="i60"><use href="#s-sideview"/></svg></div>
          <div class="rail-i"><svg class="i60"><use href="#s-sideuser"/></svg></div>
        </div>
        <div class="panel">
          <div class="filters">
            <div class="combo f-sel">显示所有<i class="dd"></i></div>
            <div class="f-input"></div>
            <div class="f-btn"><svg class="f40"><use href="#s-panfilter"/></svg></div>
            <div class="f-btn"><svg class="f40"><use href="#s-panlist"/></svg></div>
          </div>
          <div class="col-head">装配节点</div>
          <div class="tree">
            <div class="row r0"><svg class="chev" viewBox="0 0 24 24"><path d="M2 6 12 20 22 6" stroke="#222" stroke-width="4.5" fill="none"/></svg><svg class="ti40"><use href="#s-treeasm"/></svg><span class="root">装配001</span></div>
            <div class="row r1"><span class="check"><svg viewBox="0 0 24 24"><path d="M5 13 11 21 20 2" stroke="#e0101a" stroke-width="3.5" fill="none"/></svg></span><svg class="ti36"><use href="#s-treecube"/></svg><span class="name">零件002</span></div>
            <div class="row r1"><span class="check"><svg viewBox="0 0 24 24"><path d="M5 13 11 21 20 2" stroke="#e0101a" stroke-width="3.5" fill="none"/></svg></span><svg class="ti36"><use href="#s-treecube"/></svg><span class="name"><b>(F)</b>零件003</span></div>
            <div class="row r2"><svg class="chev2" viewBox="0 0 16 28"><path d="M3 2 13 14 3 26" stroke="#7c8f80" stroke-width="4.5" fill="none"/></svg><svg class="ti32"><use href="#s-folder"/></svg><span class="name">约束</span></div>
          </div>
          <div class="hscroll">
            <div class="sc-btn"><i class="arr-l"></i></div>
            <div class="thumb"><span class="grips"></span></div>
            <div class="sc-btn"><i class="arr-r"></i></div>
          </div>
        </div>
      </div>
    </aside>

    <div class="docarea">
      <div class="doctabs">
        <div class="doctab"><span>装配001.Z3ASM</span><b class="doc-x">X</b></div>
        <span class="doc-plus"></span>
        <svg class="doc-chev" viewBox="0 0 26 20"><path d="M2 2H24" stroke="#777" stroke-width="3"/><polygon points="4,8 22,8 13,18" fill="#777"/></svg>
      </div>
      <div class="viewport">
        <svg class="scene" viewBox="760 450 3080 1554">
          <g stroke="#111" stroke-width="1.6" stroke-linejoin="round">
            <polygon points="1507,1770 1501,1730 1777,1793 1999,1843 2004,1884" fill="#706f98"/>
            <polygon points="1999,1843 2232,1666 2238,1707 2004,1884" fill="#706f98"/>
            <polygon points="1777,1793 2011,1616 2232,1666 1999,1843" fill="#8a89bb"/>
            <polygon points="1338,713 1615,777 1777,1793 1501,1730" fill="#706f98"/>
            <polygon points="1615,777 1848,599 2011,1616 1777,1793" fill="#706f98"/>
            <polygon points="1573,536 1848,599 1615,777 1338,713" fill="#8a89bb"/>
          </g>
          <g fill="none" stroke="#b08050" stroke-width="1" opacity=".55">
            <polygon points="1800,1620 1904,1684 1972,1693 1884,1756 1769,1732"/>
            <polygon points="1801,1635 1904,1684 1939,1796 1820,1770"/>
            <path d="M1904,1617 1820,1770 1836,1816"/>
          </g>
          <path d="M1888,1660 1919,1667 1925,1712" fill="none" stroke="#d98a10" stroke-width="1.5"/>
          <g opacity=".6">
            <path d="M1872,1716 1908,1684" stroke="#3fb04a" stroke-width="11"/>
            <ellipse cx="1908" cy="1685" rx="10" ry="19" fill="#3fb04a"/>
            <path d="M1870,1720 1860,1660" stroke="#4c4fc4" stroke-width="11"/>
            <polygon points="1857,1638 1872,1666 1850,1668" fill="#5355cf"/>
            <path d="M1872,1716 1925,1732" stroke="#e25f8c" stroke-width="14"/>
            <polygon points="1914,1718 1942,1735 1918,1742" fill="#ee8fae"/>
          </g>
          <g class="triad">
            <path d="M879,1850 870,1795" stroke="#0000f0" stroke-width="13" stroke-linecap="square"/>
            <polygon points="868,1770 884,1795 862,1802" fill="#1a1ae6"/>
            <path d="M882,1848 915,1815" stroke="#00d800" stroke-width="12"/>
            <polygon points="937,1809 924,1832 914,1816 919,1812" fill="#009a00"/>
            <path d="M880,1851 925,1864" stroke="#ee0000" stroke-width="14"/>
            <polygon points="954,1867 930,1851 924,1873" fill="#ff2020"/>
            <text x="873" y="1763" class="ax" fill="#0000ff">Z</text>
            <text x="952" y="1810" class="ax" fill="#00e600">Y</text>
            <text x="975" y="1878" class="ax" fill="#ff0000">X</text>
          </g>
          <polygon points="989,1383 989,1420 997,1412 1004,1426 1010,1423 1003,1410 1014,1408" fill="#fff" stroke="#222" stroke-width="1.5"/>
        </svg>

        <div class="hint"><p>按下&lt;F2&gt;动态的观察</p><p>&lt;F8&gt;或者&lt;Shift-roll&gt; 查找下一个有效的过滤器设置.</p></div>

        <div class="vbar">
          <div class="vi"><svg class="t46"><use href="#s-exit"/></svg></div>
          <div class="vi"><svg class="t46"><use href="#s-tool"/></svg></div>
          <div class="va"><i class="dd"></i></div>
          <div class="vi"><svg class="t46"><use href="#s-eraser"/></svg></div>
          <div class="vi"><svg class="t46"><use href="#s-vcube1"/></svg></div>
          <div class="vi"><svg class="t46"><use href="#s-vcube2"/></svg></div>
          <div class="va"><i class="dd"></i></div>
          <div class="vi"><svg class="t46"><use href="#s-vcube3"/></svg></div>
          <div class="va"><i class="dd"></i></div>
          <div class="vi"><svg class="t46"><use href="#s-poly"/></svg></div>
          <div class="va"><i class="dd"></i></div>
          <div class="vi"><svg class="t46"><use href="#s-doc"/></svg></div>
          <div class="va"><i class="dd"></i></div>
          <div class="vi"><svg class="t46"><use href="#s-target"/></svg></div>
          <div class="va"><i class="dd"></i></div>
          <div class="vi"><svg class="t46"><use href="#s-fit"/></svg></div>
          <div class="vi"><svg class="t46"><use href="#s-dim"/></svg></div>
          <div class="va"><i class="dd"></i></div>
          <div class="vi"><svg class="t46"><use href="#s-mon"/></svg></div>
          <div class="va"><i class="dd"></i></div>
          <span class="swatch black"></span>
          <span class="swatch lilac"></span>
          <div class="vi"><svg class="t46"><use href="#s-layers"/></svg></div>
          <div class="va"><i class="dd"></i></div>
          <div class="combo c-layer"><svg class="bulbs"><use href="#s-bulbs"/></svg><span>图层0000</span><i class="dd"></i></div>
        </div>

        <div class="scale">267.453mm</div>
        <div class="navpill"><i></i><i></i><i></i><i class="short"></i></div>
      </div>
    </div>
  </main>

  <footer class="status">
    <span class="st-sep"></span>
    <span class="st-on"><svg class="st-i"><use href="#s-st1"/></svg></span>
    <svg class="st-i st-m"><use href="#s-st2"/></svg>
    <svg class="st-i st-m2"><use href="#s-st3"/></svg>
    <div class="st-input"></div>
  </footer>
</div>
</body>
</html>
```

FILE: styles.css
```css
* { box-sizing: border-box; }
html, body { margin: 0; padding: 0; }
body {
  width: 3840px; height: 2060px; overflow: hidden;
  background: #e1e5e8; color: #222;
  font-family: "Noto Sans", "Noto Sans CJK SC", sans-serif;
  font-size: 30px; font-weight: 300;
}
.defs { position: absolute; width: 0; height: 0; }
.app { display: flex; flex-direction: column; height: 2060px; }
svg { display: block; flex: none; }
.dd { display: block; flex: none; width: 0; height: 0; border-left: 6px solid transparent; border-right: 6px solid transparent; border-top: 10px solid #444; }

/* title bar */
.titlebar { height: 60px; display: flex; align-items: center; }
.qat { width: 1400px; display: flex; align-items: center; padding-left: 5px; }
.q { width: 50px; height: 42px; }
.q-dd { width: 24px; height: 30px; margin-left: 6px; }
.q-play { width: 20px; height: 44px; margin-left: 18px; }
.title { width: 1396px; text-align: center; color: #3c3c3c; white-space: nowrap; letter-spacing: -.2px; }
.winbtns { flex: 1; display: flex; align-items: center; padding-left: 888px; }
.wb-min { flex: none; width: 20px; height: 12px; border: 3px solid #a8a8a8; border-radius: 2px; background: #eee; margin-top: 10px; }
.wb-res { width: 30px; height: 30px; margin-left: 30px; }
.wb-x { color: #a8a8a8; font-size: 32px; font-weight: 700; margin-left: 31px; line-height: 34px; }

/* ribbon tabs */
.tabs { height: 57px; display: flex; align-items: stretch; border-bottom: 2px solid #b8bec8; }
.tab { padding: 0 19px; line-height: 57px; white-space: nowrap; color: #333; }
.tab.file { width: 173px; padding: 0; text-align: center; background: #2a5db0; color: #fff; border: 2px solid #1d4a94; margin-top: 1px; height: 55px; line-height: 51px; }
.tab.active { margin-left: 2px; background: #fcfcfc; border: 2px solid #c5cad1; border-bottom: 0; height: 57px; padding: 0 17px; line-height: 53px; }
.tabtools { margin-left: auto; width: 670px; display: flex; align-items: center; }
.collapse { width: 32px; height: 32px; margin-right: 22px; }
.search { width: 339px; height: 54px; background: #fff; border: 2px solid #c5cad1; display: flex; align-items: center; justify-content: space-between; padding: 0 12px 0 2px; color: #888; }
.mag { width: 32px; height: 32px; }
.gear { width: 50px; height: 50px; margin-left: 14px; }
.help { width: 50px; height: 50px; margin-left: 10px; }
.helpt { font: 700 32px "Liberation Sans", sans-serif; fill: #fff; text-anchor: middle; }
.dd-help { margin-left: 11px; }
.mb-min { flex: none; width: 18px; height: 8px; background: #111; margin-left: 18px; margin-top: 12px; }
.mb-res { width: 28px; height: 32px; margin-left: 18px; }
.mb-x { color: #111; font-weight: 700; width: 30px; margin-left: 10px; }

/* ribbon */
.ribbon { height: 228px; background: #fcfcfc; border-bottom: 2px solid #c3c8cf; display: flex; padding-top: 6px; }
.grp { height: 216px; display: flex; flex-direction: column; border-right: 1px solid #dcdfe3; position: relative; }
.g1 { width: 596px; padding-left: 8px; }
.g2 { width: 721px; padding-left: 5px; }
.g3 { width: 1017px; padding-left: 5px; }
.g4 { width: 796px; padding-left: 5px; }
.g5 { width: 373px; }
.g6 { width: 190px; }
.btns { display: flex; height: 170px; }
.rb { display: flex; flex: none; flex-direction: column; align-items: center; padding: 0 16px; white-space: nowrap; }
.rb.one { padding: 0; width: 79px; }
.i80 { width: 80px; height: 80px; margin: 0 -12px; }
.rl { display: block; margin-top: 6px; line-height: 40px; color: #222; }
.rb .dd { margin-top: 21px; }
.gl { margin-top: auto; height: 40px; line-height: 40px; margin-bottom: 3px; text-align: center; color: #7c8594; }
.gl-shift { padding-right: 42px; }
.launch { position: absolute; right: 12px; bottom: 14px; width: 24px; height: 24px; }

.smgrid { display: grid; grid-template-columns: 242px 1fr; grid-auto-rows: 57px; padding-left: 9px; height: 170px; margin-top: -3px; }
.sb { display: flex; align-items: center; gap: 9px; white-space: nowrap; }
.sb-r { gap: 8px; }
.sb-d { gap: 7px; }
.one-col { grid-template-columns: 1fr; }
.i36 { width: 36px; height: 40px; }
.sb .sdd { margin-left: 14px; }
.sb-d .sdd { margin-left: 17px; }

/* command toolbar */
.toolbar { height: 55px; display: flex; align-items: center; }
.grip { height: 42px; margin-right: 11px; border-left: 3px dotted #777; margin-left: 5px; width: 7px; }
.hot { width: 47px; height: 46px; background: #fbe07a; border: 2px solid #d9a93a; display: flex; align-items: center; justify-content: center; }
.hot .t46 { width: 42px; height: 42px; }
.hot2 { margin-left: 3px; }
.ti { width: 50px; height: 46px; display: flex; align-items: center; justify-content: center; }
.ti46 { width: 46px; }
.ti44 { width: 44px; }
.ti48 { width: 48px; }
.first-ref { margin-left: 8px; }
.t46 { width: 44px; height: 44px; }
.tdd { width: 30px; display: flex; justify-content: center; }
.tsep { display: flex; height: 40px; position: relative; }
.s20 { width: 20px; } .s24 { width: 24px; } .s18 { width: 18px; }
.tsep::before { content: ""; width: 1px; height: 40px; background: #c0c4c9; margin: 0 auto; }
.combo { height: 46px; background: #fff; border: 2px solid #c5cad1; display: flex; align-items: center; justify-content: space-between; padding: 0 14px 0 4px; color: #111; white-space: nowrap; }
.c-all { width: 233px; margin-left: 4px; }
.c-asm { width: 322px; margin-left: 4px; }
.c-sel { width: 232px; margin-left: 4px; margin-right: 2px; }

/* workspace */
.workspace { height: 1604px; display: flex; }
.manager { width: 760px; display: flex; flex-direction: column; }
.mgr-head { height: 55px; display: flex; align-items: center; padding: 0 24px 2px 6px; color: #4a4a4a; }
.mgr-head span { flex: 1; }
.pin { width: 20px; height: 24px; border: 3px solid #a8a8a8; background: #e8eaec; border-radius: 2px; }
.mgr-x { color: #b8b8b8; font-size: 34px; font-weight: 700; margin-left: 22px; }
.mgr-body { flex: 1; display: flex; min-height: 0; }
.rail { width: 79px; }
.rail-i { height: 118px; display: flex; align-items: center; justify-content: center; }
.rail-i.first { height: 120px; padding-bottom: 6px; }
.rail-i.on { height: 115px; margin-left: 3px; background: #fdfdfd; border: 2px solid #d5d8dd; border-right: 0; margin-top: 1px; padding-bottom: 2px; }
.rail-i.after { margin-top: 5px; }
.i60 { width: 58px; height: 60px; }
.panel { width: 678px; border: 2px solid #c3c8cf; padding: 0 2px 2px; display: flex; flex-direction: column; }
.filters { height: 59px; display: flex; gap: 2px; }
.f-sel { width: 252px; height: 59px; padding-right: 18px; }
.f-input { width: 295px; background: #fff; border: 2px solid #d5d8dd; }
.f-btn { width: 58px; background: #fbfbfb; border: 2px solid #d5d8dd; display: flex; align-items: center; justify-content: center; }
.f40 { width: 44px; height: 44px; }
.col-head { height: 61px; margin-top: 2px; padding-left: 12px; line-height: 62px; color: #333; background: linear-gradient(#f6f7fb, #eef0f4); border-bottom: 2px solid #a9adb3; }
.tree { flex: 1; background: repeating-linear-gradient(#cbe8ce 0 45px, #c3dfc5 45px 90px); font-size: 29px; }
.row { height: 45px; display: flex; align-items: center; white-space: nowrap; }
.r0 { padding-left: 5px; }
.r1 { padding-left: 73px; }
.r2 { padding-left: 47px; }
.chev { width: 24px; height: 24px; margin-top: -4px; }
.ti40 { width: 40px; height: 44px; margin-left: 17px; margin-right: -4px; }
.root { color: #0000ee; font-weight: 700; }
.check { flex: none; width: 33px; height: 33px; border: 3px solid #111; background: #fff; }
.ti36 { width: 38px; height: 38px; margin-left: 8px; }
.name { margin-left: 4px; color: #333; }
.name b { color: #555; font-weight: 700; }
.chev2 { width: 16px; height: 28px; }
.ti32 { width: 30px; height: 32px; margin-left: 15px; }
.r2 .name { margin-left: 8px; }
.hscroll { height: 43px; display: flex; background: linear-gradient(#d2d6e0, #dde0e7); }
.sc-btn { width: 43px; display: flex; align-items: center; justify-content: center; }
.arr-l { width: 0; height: 0; border-top: 7px solid transparent; border-bottom: 7px solid transparent; border-right: 6px solid #555; }
.arr-r { width: 0; height: 0; border-top: 7px solid transparent; border-bottom: 7px solid transparent; border-left: 6px solid #555; }
.thumb { flex: 1; border: 1px solid #878c95; background: linear-gradient(#d6d9e3 0 5px, #e8ebf0 6px, #eef0f5); display: flex; align-items: center; justify-content: center; }
.grips { width: 8px; height: 12px; background: repeating-linear-gradient(90deg, #777 0 1px, transparent 1px 2px); }

/* documents */
.docarea { flex: 1; display: flex; flex-direction: column; min-width: 0; }
.doctabs { height: 50px; display: flex; align-items: flex-end; padding-left: 4px; border-bottom: 2px solid #c3c8cf; }
.doctab { width: 354px; height: 50px; background: #fdfdfd; display: flex; align-items: center; justify-content: flex-end; padding-right: 39px; color: #111; margin-bottom: -2px; letter-spacing: -.4px; }
.doc-x { color: #7a6b48; font-weight: 700; margin-left: 12px; }
.doc-plus { width: 24px; height: 24px; margin: 0 0 11px 18px; background: linear-gradient(#a8a8a8, #a8a8a8) center/5px 24px no-repeat, linear-gradient(#a8a8a8, #a8a8a8) center/24px 5px no-repeat; }
.doc-chev { width: 26px; height: 20px; margin: 0 14px 6px auto; }
.viewport { flex: 1; position: relative; background: linear-gradient(#ffffff, #a0a0a0); box-shadow: inset 2px 0 #eceef0, inset -2px -2px #f2f3f5; }
.scene { position: absolute; left: 0; top: 0; width: 3080px; height: 1554px; }
.ax { font-size: 42px; font-weight: 400; text-anchor: middle; font-family: "Noto Sans", sans-serif; }
.reft { font: 700 11px "Liberation Sans", sans-serif; fill: #8a8a8a; text-anchor: middle; text-decoration: underline; }
.hint { position: absolute; left: 23px; top: 7px; color: #111; white-space: nowrap; letter-spacing: .35px; }
.hint p { margin: 0; line-height: 40px; }
.vbar { position: absolute; left: 864px; top: 5px; display: flex; align-items: center; height: 46px; }
.vi { width: 52px; display: flex; justify-content: center; }
.va { width: 31.5px; display: flex; justify-content: center; }
.swatch { display: block; flex: none; }
.black { width: 42px; height: 33px; background: #000; border: 1px solid #777; margin-left: 4px; }
.lilac { width: 42px; height: 41px; background: #a6a3e0; border: 2px solid #3a3a2a; margin-left: 11px; margin-right: 7px; }
.c-layer { width: 288px; height: 46px; padding: 0 14px 0 28px; }
.bulbs { width: 40px; height: 24px; }
.c-layer span { margin-left: 22px; flex: 1; font-weight: 400; }
.scale { position: absolute; left: 6px; bottom: 0; font-size: 42px; line-height: 44px; color: #000; font-weight: 400; }
.navpill { position: absolute; right: 5px; top: 1052px; width: 22px; height: 145px; background: #4a4a4a; border: 3px solid #d4d4d4; border-radius: 9px; display: flex; flex-direction: column; justify-content: flex-end; align-items: flex-end; gap: 3px; padding: 0 1px 4px 1px; }
.navpill i { display: block; width: 14px; height: 2px; background: #3fdc5a; }
.navpill i.short { width: 10px; }

/* status */
.status { height: 56px; display: flex; align-items: center; }
.st-sep { width: 1px; height: 46px; background: #777; margin-left: 2742px; }
.st-on { width: 45px; height: 44px; margin-left: 26px; background: #fbe08a; border: 2px solid #c2881f; display: flex; align-items: center; justify-content: center; }
.st-on .st-i { width: 36px; height: 36px; }
.st-i { width: 36px; height: 40px; }
.st-m { margin-left: 23px; }
.st-m2 { margin-left: 30px; }
.st-input { flex: 1; height: 48px; margin-left: 26px; margin-right: 2px; background: #fff; border: 2px solid #bfc4cb; }
```
